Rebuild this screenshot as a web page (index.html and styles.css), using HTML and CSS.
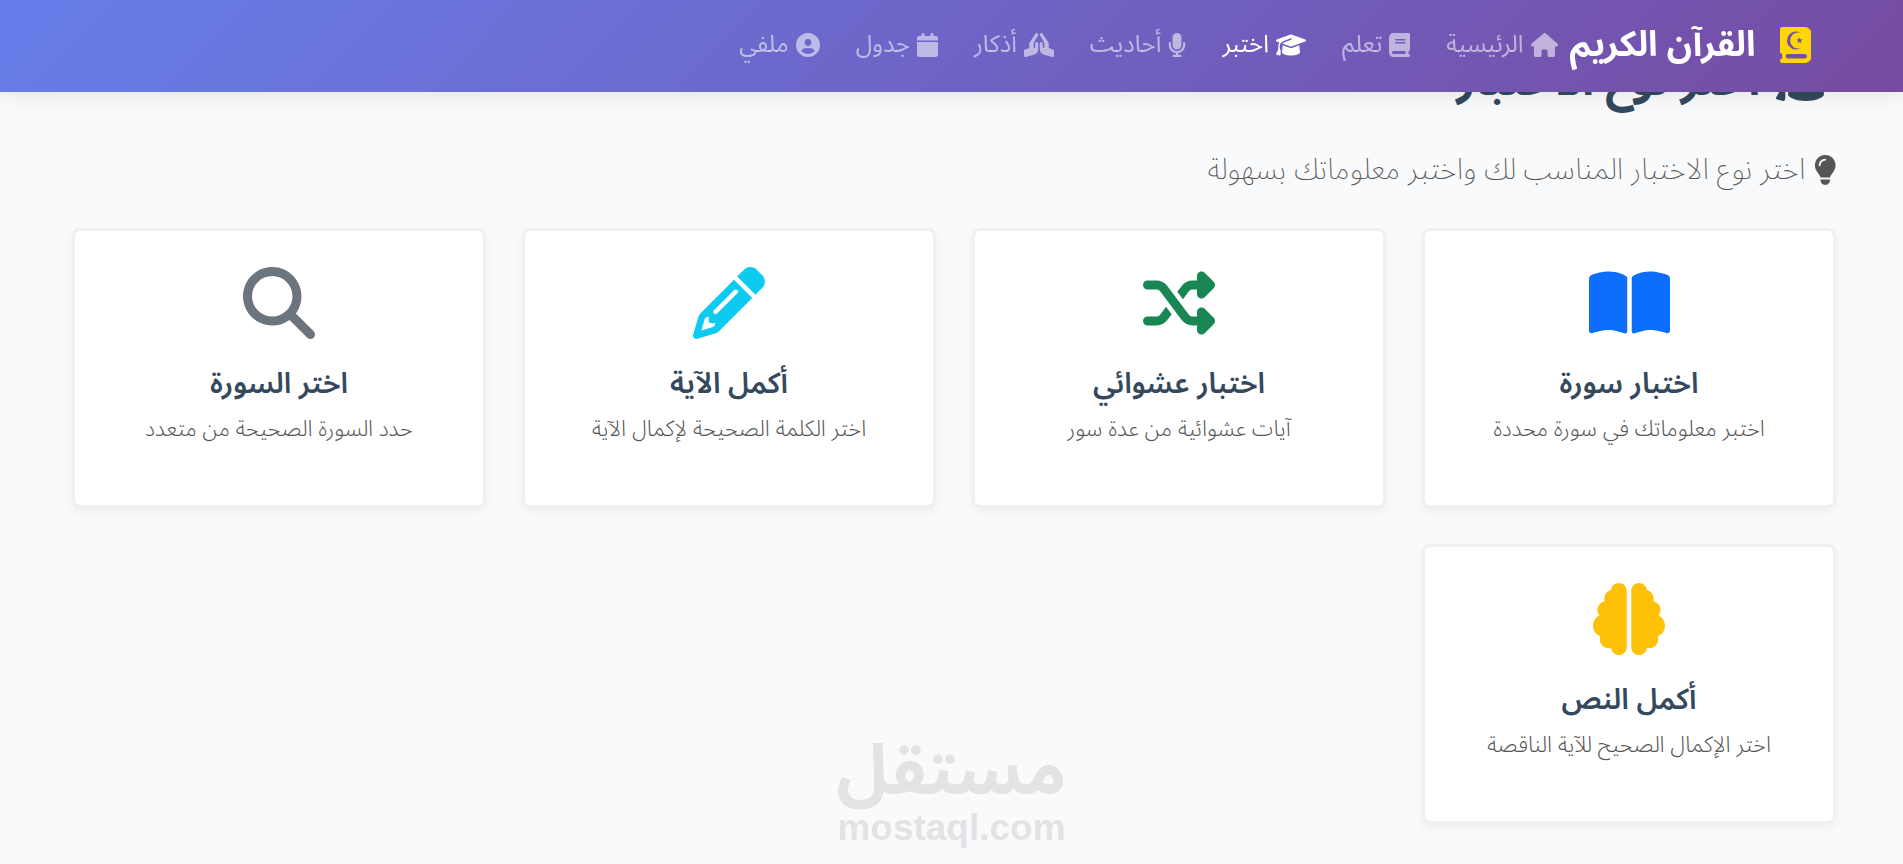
FILE: index.html
```html
<!DOCTYPE html>
<html lang="ar" dir="rtl">

<head>
  <meta charset="UTF-8">
  <title>القرآن الكريم</title>
  <meta name="viewport" content="width=device-width, initial-scale=1.0" />
  <link rel="stylesheet" href="styles.css">
</head>

<body>
  <header class="navbar">
    <a class="brand" href="#">
      <svg class="icon brand-icon" viewBox="0 0 448 512"><path fill-rule="evenodd" d="M352 0c53 0 96 43 96 96V416c0 53-43 96-96 96H64 32c-17.700 0-32-14.300-32-32s14.300-32 32-32V384c-17.700 0-32-14.300-32-32V32C0 14.300 14.300 0 32 0H352zM112 384c-17.700 0-32 14.300-32 32s14.300 32 32 32H352c17.700 0 32-14.300 32-32s-14.300-32-32-32zM302 88A128 128 0 1 0 302 296A113 113 0 1 1 302 88zM277 146l12 29 32 3-24 21 7 31-27-17-27 17 7-31-24-21 32-3z"/></svg>
      <span>القرآن الكريم</span>
    </a>
    <nav class="nav-links">
      <a href="#">
        <svg class="icon" viewBox="0 0 576 512"><path d="M575.8 255.500c0 18-15 32.100-32 32.100h-32l.7 160.200c0 2.700-.2 5.400-.5 8.100V472c0 22.100-17.900 40-40 40H456c-1.100 0-2.200 0-3.300-.1c-1.400.1-2.800.1-4.200.1H416 392c-22.100 0-40-17.900-40-40V448 384c0-17.700-14.300-32-32-32H256c-17.700 0-32 14.300-32 32v64 24c0 22.100-17.900 40-40 40H160 128.100c-1.500 0-3-.1-4.500-.2c-1.200.1-2.400.2-3.600.2H104c-22.100 0-40-17.900-40-40V360c0-.9 0-1.900.1-2.800V287.600H32c-18 0-32-14-32-32.100c0-9 3-17 10-24L266.400 8c7-7 15-8 22-8s15 2 21 7L564.800 231.500c8 7 12 15 11 24z"/></svg>
        <span>الرئيسية</span>
      </a>
      <a href="#">
        <svg class="icon" viewBox="0 0 448 512"><path d="M96 0C43 0 0 43 0 96V416c0 53 43 96 96 96H384h32c17.700 0 32-14.300 32-32s-14.300-32-32-32V384c17.700 0 32-14.300 32-32V32c0-17.700-14.300-32-32-32H384 96zm0 384H352v64H96c-17.700 0-32-14.300-32-32s14.300-32 32-32zm32-240c0-8.800 7.200-16 16-16H336c8.800 0 16 7.200 16 16s-7.200 16-16 16H144c-8.800 0-16-7.200-16-16zm16 48H336c8.800 0 16 7.200 16 16s-7.200 16-16 16H144c-8.800 0-16-7.200-16-16s7.200-16 16-16z"/></svg>
        <span>تعلم</span>
      </a>
      <a href="#" class="active">
        <svg class="icon" viewBox="0 0 640 512"><path id="cap" d="M320 32c-8.100 0-16.100 1.400-23.700 4.100L15.800 137.400C6.300 140.900 0 149.900 0 160s6.300 19.100 15.800 22.600l57.900 20.900C57.300 229.300 48 259.800 48 291.900v28.100c0 28.400-10.800 57.700-22.300 80.800c-6.500 13-13.900 25.800-22.500 37.600C0 442.700-.9 448.300.9 453.400s6 8.900 11.200 10.200l64 16c4.200 1.100 8.700.3 12.400-2s6.300-6.100 7.100-10.400c8.600-42.800 4.300-81.200-2.100-108.700C90.300 344.300 86 329.800 80 316.500V291.900c0-30.200 10.200-58.700 27.900-81.500c12.900-15.500 29.600-28 49.200-35.700l157-61.700c8.200-3.200 17.500.8 20.700 9s-.8 17.500-9 20.700l-157 61.700c-12.400 4.900-23.300 12.400-32.200 21.600l159.600 57.600c7.600 2.700 15.600 4.100 23.700 4.100s16.100-1.400 23.700-4.100L624.200 182.600c9.500-3.400 15.800-12.500 15.800-22.600s-6.300-19.100-15.800-22.600L343.700 36.100C336.100 33.400 328.100 32 320 32zM128 408c0 35.300 86 72 192 72s192-36.700 192-72L496.700 262.600 354.500 314c-11.100 4-22.800 6-34.500 6s-23.500-2-34.500-6L143.300 262.600 128 408z"/></svg>
        <span>اختبر</span>
      </a>
      <a href="#">
        <svg class="icon" viewBox="0 0 384 512"><path d="M192 0C139 0 96 43 96 96V256c0 53 43 96 96 96s96-43 96-96V96c0-53-43-96-96-96zM64 216c0-13.300-10.700-24-24-24s-24 10.700-24 24v40c0 89.100 66.200 162.700 152 174.400V464H120c-13.300 0-24 10.700-24 24s10.700 24 24 24h72 72c13.300 0 24-10.700 24-24s-10.700-24-24-24H216V430.400c85.800-11.700 152-85.300 152-174.400V216c0-13.300-10.700-24-24-24s-24 10.700-24 24v40c0 70.700-57.300 128-128 128s-128-57.300-128-128V216z"/></svg>
        <span>أحاديث</span>
      </a>
      <a href="#">
        <svg class="icon" viewBox="0 0 640 512"><path id="hand" d="M351.200 4.800c3.200-2 6.600-3.300 10-4.100c4.700-1 9.600-.9 14.100.1c7.700 1.800 14.800 6.500 19.400 13.600L514.600 194.200c8.800 13.100 13.400 28.600 13.400 44.400v73.500c0 6.900 4.400 13 10.900 15.200l79.200 26.400C631.200 358 640 370.200 640 384v96c0 9.900-4.600 19.300-12.500 25.400s-18.100 8.100-27.700 5.500L431 465.100c-56.500-15.400-95-67.700-95-126.200V224c0-17.700 14.300-32 32-32s32 14.300 32 32v80c0 8.800 7.200 16 16 16s16-7.200 16-16V219.100c0-7-1.800-13.800-5.300-19.800L340.300 48.100c-1.700-3-2.900-6.100-3.600-9.300c-1-4.700-1-9.600.1-14.100c1.900-8 6.800-15.200 14.300-19.900z"/><use href="#hand" transform="translate(640 0) scale(-1 1)"/></svg>
        <span>أذكار</span>
      </a>
      <a href="#">
        <svg class="icon" viewBox="0 0 448 512"><path d="M96 32V64H48C21.500 64 0 85.500 0 112v48H448V112c0-26.500-21.500-48-48-48H352V32c0-17.700-14.300-32-32-32s-32 14.300-32 32V64H160V32c0-17.700-14.300-32-32-32S96 14.300 96 32zM448 192H0V464c0 26.500 21.500 48 48 48H400c26.500 0 48-21.500 48-48V192z"/></svg>
        <span>جدول</span>
      </a>
      <a href="#">
        <svg class="icon" viewBox="0 0 512 512"><path d="M399 384.200C376.900 345.800 335.400 320 288 320H224c-47.400 0-88.900 25.800-111 64.200c35.200 39.200 86.200 63.800 143 63.800s107.800-24.700 143-63.800zM0 256a256 256 0 1 1 512 0A256 256 0 1 1 0 256zm256 16a72 72 0 1 0 0-144 72 72 0 1 0 0 144z"/></svg>
        <span>ملفي</span>
      </a>
    </nav>
  </header>

  <main class="container">
    <h1 class="page-title">
      <svg class="icon" viewBox="0 0 640 512"><use href="#cap"/></svg>
      <span>اختر نوع الاختبار</span>
    </h1>
    <p class="lead">
      <svg class="icon" viewBox="0 0 384 512"><path d="M272 384c9.600-31.900 29.500-59.100 49.200-86.200c5.200-7.100 10.400-14.200 15.400-21.400c19.800-28.500 31.400-63 31.400-100.300C368 78.800 289.200 0 192 0S16 78.800 16 176c0 37.300 11.600 71.900 31.400 100.300c5 7.200 10.200 14.300 15.400 21.400c19.800 27.100 39.700 54.400 49.200 86.200H272zM192 512c44.200 0 80-35.800 80-80V416H112v16c0 44.200 35.800 80 80 80zM112 176c0 8.800-7.200 16-16 16s-16-7.200-16-16c0-61.900 50.100-112 112-112c8.800 0 16 7.200 16 16s-7.200 16-16 16c-44.200 0-80 35.800-80 80z"/></svg>
      <span>اختر نوع الاختبار المناسب لك واختبر معلوماتك بسهولة</span>
    </p>

    <div class="grid">
      <a class="card" href="#">
        <svg class="icon card-icon blue" viewBox="0 0 576 512"><path d="M249.600 471.500c10.800 3.800 22.400-4.100 22.400-15.500V78.600c0-4.200-1.600-8.400-5-11C247.400 52 202.400 32 144 32C93.500 32 46.300 45.300 18.100 56.100C6.800 60.500 0 71.700 0 83.800V454.100c0 11.900 12.800 20.200 24.100 16.500C55.600 460.100 105.500 448 144 448c33.900 0 79 14 105.600 23.500zm76.800 0C353 462 398.100 448 432 448c38.500 0 88.400 12.100 119.900 22.600c11.300 3.800 24.100-4.600 24.100-16.500V83.800c0-12.100-6.800-23.300-18.100-27.600C529.700 45.300 482.500 32 432 32c-58.400 0-103.400 20-123 35.600c-3.300 2.600-5 6.800-5 11V456c0 11.400 11.700 19.300 22.400 15.500z"/></svg>
        <h2>اختبار سورة</h2>
        <p>اختبر معلوماتك في سورة محددة</p>
      </a>
      <a class="card" href="#">
        <svg class="icon card-icon green" viewBox="0 0 512 512"><path d="M403.800 34.400c12-5 25.700-2.200 34.900 6.900l64 64c6 6 9.400 14.100 9.400 22.600s-3.400 16.600-9.400 22.600l-64 64c-9.200 9.200-22.900 11.900-34.900 6.900s-19.800-16.600-19.800-29.600V160H352c-10.100 0-19.600 4.700-25.600 12.800L284 229.300 244 176l31.200-41.600C293.300 110.200 321.800 96 352 96h32V64c0-12.900 7.800-24.600 19.800-29.600zM164 282.700L204 336l-31.200 41.600C154.700 401.800 126.200 416 96 416H32c-17.700 0-32-14.300-32-32s14.300-32 32-32H96c10.100 0 19.600-4.700 25.600-12.800L164 282.700zm274.600 188c-9.200 9.200-22.900 11.900-34.900 6.900s-19.800-16.600-19.800-29.600V416H352c-30.200 0-58.700-14.200-76.800-38.400L121.600 172.800c-6-8.100-15.500-12.800-25.600-12.800H32c-17.700 0-32-14.300-32-32s14.300-32 32-32H96c30.200 0 58.700 14.200 76.800 38.400L326.400 339.200c6 8.100 15.500 12.800 25.600 12.800h32V320c0-12.900 7.800-24.600 19.800-29.600s25.700-2.200 34.900 6.900l64 64c6 6 9.400 14.100 9.400 22.600s-3.400 16.600-9.400 22.600l-64 64z"/></svg>
        <h2>اختبار عشوائي</h2>
        <p>آيات عشوائية من عدة سور</p>
      </a>
      <a class="card" href="#">
        <svg class="icon card-icon cyan" viewBox="0 0 512 512"><path d="M410.300 231l11.300-11.300-33.900-33.900-62.100-62.100L291.700 89.800l-11.300 11.300-22.600 22.600L58.600 322.900c-10.400 10.400-18 23.300-22.200 37.400L1 480.700c-2.500 8.400-.2 17.500 6.100 23.700s15.300 8.500 23.700 6.100l120.300-35.400c14.100-4.200 27-11.800 37.400-22.200L387.700 253.700 410.300 231zM160 399.400l-9.100 22.700c-4 3.100-8.500 5.400-13.300 6.900L59.400 452l23-78.100c1.400-4.900 3.800-9.400 6.900-13.300l22.700-9.100v32c0 8.800 7.200 16 16 16h32zM362.700 18.700L348.300 33.200 325.700 55.800 314.300 67.100l33.900 33.900 62.100 62.100 33.900 33.900 11.300-11.300 22.600-22.600 14.500-14.500c25-25 25-65.500 0-90.500L453.300 18.700c-25-25-65.500-25-90.500 0zm-47.400 168l-144 144c-6.200 6.200-16.400 6.200-22.600 0s-6.200-16.400 0-22.600l144-144c6.200-6.200 16.400-6.200 22.600 0s6.200 16.400 0 22.600z"/></svg>
        <h2>أكمل الآية</h2>
        <p>اختر الكلمة الصحيحة لإكمال الآية</p>
      </a>
      <a class="card" href="#">
        <svg class="icon card-icon gray" viewBox="0 0 512 512"><path d="M416 208c0 45.900-14.900 88.300-40 122.700L502.600 457.400c12.500 12.500 12.500 32.800 0 45.300s-32.800 12.500-45.300 0L330.700 376c-34.400 25.200-76.800 40-122.700 40C93.100 416 0 322.900 0 208S93.100 0 208 0S416 93.100 416 208zM208 352a144 144 0 1 0 0-288 144 144 0 1 0 0 288z"/></svg>
        <h2>اختر السورة</h2>
        <p>حدد السورة الصحيحة من متعدد</p>
      </a>
      <a class="card" href="#">
        <svg class="icon card-icon yellow" viewBox="0 0 512 512"><path d="M184 0c30.900 0 56 25.100 56 56V456c0 30.900-25.100 56-56 56c-28.900 0-52.700-21.900-55.700-50.100c-5.200 1.400-10.700 2.100-16.300 2.100c-35.300 0-64-28.700-64-64c0-7.400 1.300-14.600 3.600-21.200C21.400 367.400 0 338.200 0 304c0-31.900 18.700-59.500 45.800-72.300C37.100 220.800 32 207 32 192c0-30.700 21.600-56.300 50.400-62.600C80.800 123.900 80 118 80 112c0-29.900 20.600-55.100 48.300-62.100C131.300 21.900 155.100 0 184 0zM328 0c28.900 0 52.600 21.900 55.700 49.900c27.800 7 48.300 32.100 48.300 62.100c0 6-.8 11.900-2.400 17.400c28.800 6.200 50.400 31.900 50.400 62.600c0 15-5.100 28.800-13.800 39.700C493.300 244.500 512 272.100 512 304c0 34.200-21.400 63.400-51.600 74.800c2.300 6.600 3.600 13.800 3.600 21.200c0 35.300-28.700 64-64 64c-5.600 0-11.100-.7-16.300-2.100c-3 28.200-26.800 50.100-55.700 50.100c-30.900 0-56-25.100-56-56V56c0-30.900 25.100-56 56-56z"/></svg>
        <h2>أكمل النص</h2>
        <p>اختر الإكمال الصحيح للآية الناقصة</p>
      </a>
    </div>
  </main>

  <div class="watermark">
    <span class="watermark-name">مستقل</span>
    <span class="watermark-site" dir="ltr">mostaql.com</span>
  </div>
</body>

</html>
```

FILE: styles.css
```css
* {
  box-sizing: border-box;
}

body {
  font-family: "Segoe UI", "Noto Sans Arabic", "DejaVu Sans", sans-serif;
  margin: 0;
  background: #f8fafc;
  color: #34495e;
}

a {
  color: inherit;
  text-decoration: none;
}

.icon {
  height: 1em;
  fill: currentColor;
  flex-shrink: 0;
}

.navbar {
  position: fixed;
  top: 0;
  left: 0;
  right: 0;
  z-index: 10;
  display: flex;
  align-items: center;
  gap: 12px;
  height: 92px;
  padding: 0 92px 3px;
  background: linear-gradient(135deg, #667eea 0%, #764ba2 100%);
  box-shadow: 0 2px 20px rgba(0, 0, 0, 0.1);
}

.brand {
  display: flex;
  align-items: center;
  gap: 24px;
  color: white;
  font-size: 35px;
  line-height: 54px;
  font-weight: bold;
}

.brand-icon {
  color: gold;
  font-size: 36px;
}

.nav-links {
  display: flex;
  gap: 36px;
  font-size: 24px;
  line-height: 36px;
  color: rgba(255, 255, 255, 0.55);
}

.nav-links a {
  display: flex;
  align-items: center;
  gap: 7px;
}

.nav-links .icon {
  font-size: 24px;
}

.nav-links .active {
  color: white;
}

.container {
  padding: 44px 67px 40px 72px;
}

.page-title {
  display: flex;
  align-items: center;
  gap: 16px;
  height: 72px;
  margin: 0 0 32px;
  font-size: 45px;
  font-weight: bold;
}

.page-title .icon {
  font-size: 48px;
}

.lead {
  display: flex;
  align-items: center;
  gap: 8px;
  margin: 0 0 36px;
  font-size: 29px;
  line-height: 44px;
  font-weight: 200;
  color: #555;
}

.lead .icon {
  font-size: 30px;
}

.grid {
  display: grid;
  grid-template-columns: repeat(4, 1fr);
  gap: 36px;
}

.card {
  display: flex;
  flex-direction: column;
  align-items: center;
  min-height: 280px;
  padding: 36px;
  background: white;
  border: 3px solid #f0f0f0;
  border-radius: 8px;
  box-shadow: 0 4px 8px rgba(0, 0, 0, 0.05);
  text-align: center;
}

.card-icon {
  font-size: 72px;
}

.card h2 {
  margin: 24px 0 8px;
  font-size: 29px;
  line-height: 42px;
  font-weight: 600;
}

.card p {
  margin: 0;
  font-size: 22px;
  line-height: 32px;
  font-weight: 300;
  color: #555;
}

.blue {
  color: #0d6efd;
}

.green {
  color: #198754;
}

.cyan {
  color: #0dcaf0;
}

.gray {
  color: #6c757d;
}

.yellow {
  color: #ffc107;
}

.watermark {
  position: fixed;
  left: 0;
  right: 0;
  bottom: 16px;
  display: flex;
  flex-direction: column;
  align-items: center;
  color: #e1e3e5;
  font-weight: bold;
  pointer-events: none;
}

.watermark-name {
  font-size: 69px;
  line-height: 72px;
}

.watermark-site {
  font-family: "Liberation Sans", Arial, sans-serif;
  font-size: 37px;
  line-height: 40px;
}

@media (max-width: 1200px) {
  .grid {
    grid-template-columns: repeat(2, 1fr);
  }
}
```
